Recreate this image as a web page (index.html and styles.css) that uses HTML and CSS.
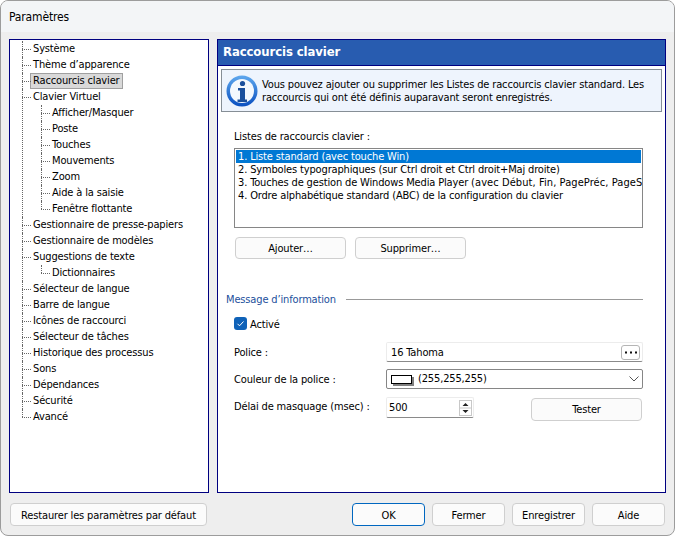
FILE: index.html
```html
<!DOCTYPE html>
<html lang="fr">
<head>
    <meta charset="UTF-8">
    <title>Paramètres</title>
    <link rel="stylesheet" href="styles.css">
</head>
<body>
    <div class="window">
        <div class="titlebar">Paramètres</div>
        <div class="content">
            <div class="columns">
                <div class="tree-box">
                    <ul class="tree">
                        <li><span>Système</span></li>
                        <li><span>Thème d’apparence</span></li>
                        <li><span class="selected">Raccourcis clavier</span></li>
                        <li><span>Clavier Virtuel</span>
                            <ul>
                                <li><span>Afficher/Masquer</span></li>
                                <li><span>Poste</span></li>
                                <li><span>Touches</span></li>
                                <li><span>Mouvements</span></li>
                                <li><span>Zoom</span></li>
                                <li><span>Aide à la saisie</span></li>
                                <li><span>Fenêtre flottante</span></li>
                            </ul>
                        </li>
                        <li><span>Gestionnaire de presse-papiers</span></li>
                        <li><span>Gestionnaire de modèles</span></li>
                        <li><span>Suggestions de texte</span>
                            <ul>
                                <li><span>Dictionnaires</span></li>
                            </ul>
                        </li>
                        <li><span>Sélecteur de langue</span></li>
                        <li><span>Barre de langue</span></li>
                        <li><span>Icônes de raccourci</span></li>
                        <li><span>Sélecteur de tâches</span></li>
                        <li><span>Historique des processus</span></li>
                        <li><span>Sons</span></li>
                        <li><span>Dépendances</span></li>
                        <li><span>Sécurité</span></li>
                        <li><span>Avancé</span></li>
                    </ul>
                </div>
                <div class="panel">
                    <div class="panel-title">Raccourcis clavier</div>
                    <div class="info">
                        <svg class="info-icon" viewBox="0 0 32 32" width="32" height="32">
                            <defs>
                                <linearGradient id="ring" x1="0" y1="0" x2="0" y2="1">
                                    <stop offset="0" stop-color="#5fa8ee"/>
                                    <stop offset="1" stop-color="#0a4fc0"/>
                                </linearGradient>
                            </defs>
                            <circle cx="16" cy="16" r="15.5" fill="url(#ring)"/>
                            <circle cx="16" cy="16" r="12" fill="#f4f8fd"/>
                            <circle cx="16.5" cy="8.5" r="2.6" fill="#1a4f9c"/>
                            <path d="M12 13h7v11.500h2V27H11.500v-2.500h2.500V15.500H12z" fill="#1a4f9c"/>
                        </svg>
                        <p>Vous pouvez ajouter ou supprimer les Listes de raccourcis clavier standard. Les raccourcis qui ont été définis auparavant seront enregistrés.</p>
                    </div>
                    <div class="shortcuts">
                        <div class="list-label">Listes de raccourcis clavier :</div>
                        <ul class="listbox">
                            <li class="current">1. Liste standard (avec touche Win)</li>
                            <li>2. Symboles typographiques (sur Ctrl droit et Ctrl droit+Maj droite)</li>
                            <li>3. Touches de gestion de Windows Media Player <span class="wide">(avec Début, Fin, PagePréc, PageS</span></li>
                            <li>4. Ordre alphabétique standard (ABC) de la configuration du clavier</li>
                        </ul>
                        <div class="list-buttons">
                            <button class="btn">Ajouter…</button>
                            <button class="btn">Supprimer…</button>
                        </div>
                    </div>
                    <div class="section-head"><span>Message d’information</span><i></i></div>
                    <div class="settings">
                        <div class="check-row">
                            <span class="checkbox">
                                <svg viewBox="0 0 13 13" width="13" height="13"><path d="M3.500 6.800l2 2 4-4.300" fill="none" stroke="#fff"/></svg>
                            </span>
                            <span class="check-label">Activé</span>
                        </div>
                        <div class="row font-row">
                            <label>Police :</label>
                            <div class="field flat">16 Tahoma
                                <span class="dots">
                                    <svg viewBox="0 0 17 13" width="17" height="13"><path d="M3 5.500h2v2H3zM8 5.500h2v2H8zM13 5.500h2v2h-2z" fill="#111"/></svg>
                                </span>
                            </div>
                        </div>
                        <div class="row color-row">
                            <label>Couleur de la police :</label>
                            <div class="field combo">
                                <span class="swatch"></span>(255,255,255)
                                <svg class="chevron" viewBox="0 0 10 6" width="10" height="6"><path d="M.5.500l4.500 4.500 4.500-4.500" fill="none" stroke="#555"/></svg>
                            </div>
                        </div>
                        <div class="row delay-row">
                            <label>Délai de masquage (msec) :</label>
                            <div class="field spin">500
                                <span class="spin-btns">
                                    <svg viewBox="0 0 11 14" width="11" height="14"><path d="M5.500 2l3 3h-6zM5.500 12l3-3h-6z" fill="#222"/><path d="M0 7h11" stroke="#c8c8c8"/></svg>
                                </span>
                            </div>
                            <button class="btn test">Tester</button>
                        </div>
                    </div>
                </div>
            </div>
            <div class="footer">
                <button class="btn restore">Restaurer les paramètres par défaut</button>
                <div class="actions">
                    <button class="btn default">OK</button>
                    <button class="btn">Fermer</button>
                    <button class="btn">Enregistrer</button>
                    <button class="btn">Aide</button>
                </div>
            </div>
        </div>
    </div>
</body>
</html>
```

FILE: styles.css
```css
* {
    box-sizing: border-box;
}
html, body {
    margin: 0;
    padding: 0;
    background: #fff;
}
body {
    width: 675px;
    height: 536px;
    overflow: hidden;
    font-family: "DejaVu Sans Condensed", "DejaVu Sans", sans-serif;
    font-size: 11px;
    letter-spacing: -0.15px;
    color: #000;
}
.window {
    width: 675px;
    height: 536px;
    display: flex;
    flex-direction: column;
    border: 1px solid #9c9c9c;
    border-radius: 8px;
    overflow: hidden;
    background: #eeeeee;
}
.titlebar {
    height: 31px;
    padding: 9px 8px 0;
    font-size: 12px;
    background: #f3f5f7;
    flex: none;
}
.content {
    flex: 1;
    padding: 7px 8px 8px;
    display: flex;
    flex-direction: column;
}
.columns {
    display: flex;
    gap: 8px;
    height: 454px;
    flex: none;
}

/* tree */
.tree-box {
    width: 200px;
    flex: none;
    background: #fff;
    border: 1px solid #000080;
    padding: 1px 0 0 12px;
}
.tree, .tree ul {
    list-style: none;
    margin: 0;
    padding: 0;
}
.tree ul {
    padding-left: 8px;
}
.tree li {
    position: relative;
    padding-left: 11px;
    line-height: 16px;
}
.tree li > span {
    display: block;
    width: max-content;
    height: 16px;
    line-height: 16px;
    white-space: nowrap;
}
.tree li::before {
    content: "";
    position: absolute;
    left: 0;
    top: 0;
    bottom: 0;
    border-left: 1px dotted #666;
}
.tree li:last-child::before {
    bottom: auto;
    height: 8px;
}
.tree li::after {
    content: "";
    position: absolute;
    left: 0;
    top: 8px;
    width: 9px;
    border-top: 1px dotted #666;
}
.tree li > span.selected {
    margin-left: -3px;
    padding: 0 3px;
    background: #d9d9d9;
    box-shadow: inset 0 0 0 1px #a0a0a0;
}

/* right panel */
.panel {
    width: 449px;
    flex: none;
    background: #fff;
    border: 1px solid #000080;
    display: flex;
    flex-direction: column;
}
.panel-title {
    height: 26px;
    line-height: 24px;
    padding-left: 5px;
    background: #285cb0;
    border-bottom: 1px solid #000080;
    color: #fff;
    font-size: 13px;
    font-weight: bold;
    letter-spacing: -0.1px;
    flex: none;
}
.info {
    margin: 3px 3px 0;
    height: 43px;
    display: flex;
    align-items: center;
    gap: 4px;
    padding-left: 4px;
    background: #eef4fd;
    border: 1px solid #868e96;
    flex: none;
}
.info p {
    margin: 0;
    line-height: 13px;
    width: 392px;
}
.info-icon {
    flex: none;
}
.shortcuts {
    padding: 18px 22px 0 16px;
}
.list-label {
    height: 18px;
    line-height: 14px;
}
.listbox {
    list-style: none;
    margin: 0;
    padding: 1px;
    height: 80px;
    border: 1px solid #868686;
    overflow: hidden;
}
.listbox li {
    height: 13px;
    line-height: 13px;
    padding-left: 2px;
    white-space: nowrap;
}
.listbox li.current {
    background: #0078d4;
    color: #fff;
}
.wide {
    letter-spacing: 0.08px;
}
.btn {
    font-family: inherit;
    font-size: 11px;
    letter-spacing: inherit;
    color: #000;
    background: #fbfbfb;
    border: 1px solid #cfcfcf;
    border-radius: 4px;
    padding: 0;
    height: 23px;
}
.list-buttons {
    display: flex;
    gap: 9px;
    margin: 9px 0 0 1px;
}
.list-buttons .btn {
    width: 111px;
    height: 22px;
}
.section-head {
    display: flex;
    align-items: center;
    gap: 10px;
    margin: 32px 22px 0 8px;
    height: 16px;
    color: #1c4f9c;
}
.section-head i {
    flex: 1;
    border-top: 1px solid #999;
}
.settings {
    padding: 10px 22px 0 16px;
}
.check-row {
    display: flex;
    align-items: center;
    gap: 3px;
    height: 13px;
}
.check-label {
    padding-top: 2px;
}
.checkbox {
    width: 13px;
    height: 13px;
    border-radius: 3px;
    background: #0f62b8;
    display: flex;
}
.row {
    display: flex;
    align-items: center;
}
.row label {
    width: 152px;
    flex: none;
}
.field {
    height: 20px;
    line-height: 18px;
    flex: 1;
    padding-left: 4px;
    background: #fff;
    border: 1px solid #ececec;
    border-bottom-color: #8a8a8a;
    display: flex;
    align-items: center;
    border-radius: 2px;
}
.font-row {
    margin-top: 12px;
}
.flat {
    padding-top: 1px;
}
.color-row {
    margin-top: 7px;
}
.delay-row {
    margin-top: 8px;
    align-items: flex-start;
}
.delay-row label {
    line-height: 20px;
}
.dots {
    margin-left: auto;
    margin-right: 2px;
    margin-top: -1px;
    width: 19px;
    height: 15px;
    border: 1px solid #b5b5b5;
    border-radius: 3px;
    display: flex;
}
.combo {
    border: 1px solid #868686;
}
.swatch {
    width: 21px;
    height: 9px;
    border: 1px solid #000;
    background: #fff;
    box-shadow: 2px 2px 0 #808080;
    margin-right: 6px;
}
.chevron {
    margin-left: auto;
    margin-right: 3px;
}
.spin {
    flex: none;
    width: 88px;
    height: 21px;
    padding-left: 2px;
}
.spin-btns {
    margin-left: auto;
    margin-right: 1px;
    width: 13px;
    height: 16px;
    border: 1px solid #c8c8c8;
    display: flex;
}
.test {
    width: 111px;
    margin: 1px 0 0 57px;
}

/* footer */
.footer {
    display: flex;
    justify-content: space-between;
    margin-top: 10px;
    padding: 0 1px;
}
.footer .btn {
    padding-top: 1px;
}
.restore {
    width: 197px;
}
.actions {
    display: flex;
    gap: 7px;
}
.actions .btn {
    width: 73px;
}
.default {
    border-color: #0067c0;
}
```
